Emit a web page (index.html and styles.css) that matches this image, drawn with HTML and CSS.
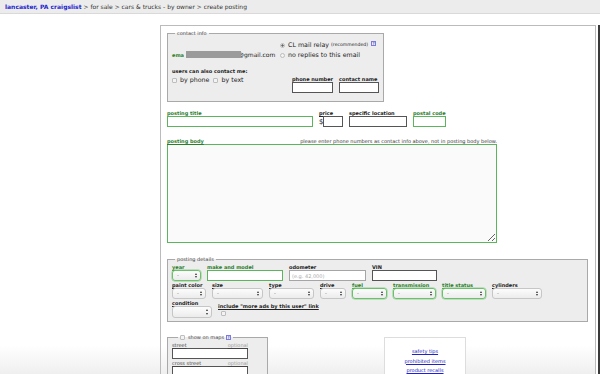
FILE: index.html
```html
<!DOCTYPE html>
<html lang="en">
<head>
    <meta charset="UTF-8">
    <title>craigslist | create posting</title>
    <link rel="stylesheet" href="styles.css">
</head>
<body>
    <div class="crumbs">
        <a class="home" href="#">lancaster, PA craigslist</a> &gt; for sale &gt; cars &amp; trucks - by owner &gt; create posting
    </div>

    <div class="form">
        <!-- contact -->
        <fieldset class="contact">
            <legend>contact info</legend>
            <div class="contact-top">
                <div class="email">
                    <span class="green-lbl">ema</span><span class="blur"></span>@gmail.com
                </div>
                <div class="relay">
                    <label class="opt"><input type="radio" name="relay" class="radio" checked>CL mail relay <small>(recommended)</small><span class="help">?</span></label>
                    <label class="opt"><input type="radio" name="relay" class="radio">no replies to this email</label>
                </div>
            </div>
            <div class="contact-bottom">
                <div class="also">
                    <div class="also-title">users can also contact me:</div>
                    <div class="also-opts">
                        <label class="opt"><input type="checkbox" class="check">by phone</label>
                        <label class="opt"><input type="checkbox" class="check">by text</label>
                    </div>
                </div>
                <div class="field">
                    <span class="lbl">phone number</span>
                    <input type="text" class="txt w41">
                </div>
                <div class="field">
                    <span class="lbl">contact name</span>
                    <input type="text" class="txt w40">
                </div>
            </div>
        </fieldset>

        <!-- title / price / location -->
        <div class="row title-row">
            <div class="field">
                <span class="lbl green">posting title</span>
                <input type="text" class="txt green w146">
            </div>
            <div class="field">
                <span class="lbl">price</span>
                <div class="price"><span class="dollar">$</span><input type="text" class="txt w20"></div>
            </div>
            <div class="field">
                <span class="lbl">specific location</span>
                <input type="text" class="txt w58">
            </div>
            <div class="field">
                <span class="lbl green">postal code</span>
                <input type="text" class="txt green w33">
            </div>
        </div>

        <div class="body-head">
            <span class="lbl green">posting body</span>
            <span class="note">please enter phone numbers as contact info above, not in posting body below.</span>
        </div>
        <textarea class="body"></textarea>

        <!-- details -->
        <fieldset class="details">
            <legend>posting details</legend>
            <div class="drow">
                <div class="field w29">
                    <span class="lbl green">year</span>
                    <span class="sel green">-</span>
                </div>
                <div class="field">
                    <span class="lbl green">make and model</span>
                    <input type="text" class="txt green w76">
                </div>
                <div class="field">
                    <span class="lbl">odometer</span>
                    <input type="text" class="txt grey w77" placeholder="(e.g. 42,000)">
                </div>
                <div class="field">
                    <span class="lbl">VIN</span>
                    <input type="text" class="txt w65">
                </div>
            </div>
            <div class="drow">
                <div class="field w34"><span class="lbl">paint color</span><span class="sel">-</span></div>
                <div class="field w51"><span class="lbl">size</span><span class="sel">-</span></div>
                <div class="field w45"><span class="lbl">type</span><span class="sel">-</span></div>
                <div class="field w26"><span class="lbl">drive</span><span class="sel">-</span></div>
                <div class="field w35"><span class="lbl green">fuel</span><span class="sel green">-</span></div>
                <div class="field w43"><span class="lbl green">transmission</span><span class="sel green">-</span></div>
                <div class="field w44"><span class="lbl green">title status</span><span class="sel green">-</span></div>
                <div class="field w50"><span class="lbl">cylinders</span><span class="sel">-</span></div>
            </div>
            <div class="drow">
                <div class="field w40"><span class="lbl">condition</span><span class="sel tall"></span></div>
                <div class="field">
                    <span class="lbl">include "more ads by this user" link</span>
                    <input type="checkbox" class="check ads">
                </div>
            </div>
        </fieldset>

        <div class="bottom">
            <fieldset class="maps">
                <legend><input type="checkbox" class="check">show on maps<span class="help">?</span></legend>
                <div class="mlbl"><span>street</span><span class="optional">optional</span></div>
                <input type="text" class="txt w76">
                <div class="mlbl"><span>cross street</span><span class="optional">optional</span></div>
                <input type="text" class="txt w76">
            </fieldset>

            <div class="links">
                <a href="#">safety tips</a>
                <a href="#">prohibited items</a>
                <a href="#">product recalls</a>
            </div>
        </div>
    </div>
</body>
</html>
```

FILE: styles.css
```css
* {
    box-sizing: border-box;
}

html {
    min-height: 100%;
    background: linear-gradient(to bottom, #fff 345px, #efefef 374px) no-repeat;
}

body {
    margin: 0;
    font-family: "DejaVu Sans", Verdana, sans-serif;
    font-size: 5px;
    color: #222;
}

a {
    color: #2222c4;
}

/* breadcrumb bar */
.crumbs {
    height: 14px;
    padding: 0 5px;
    background-color: #ececec;
    border-bottom: 1px solid #d9d9d9;
    line-height: 13px;
    font-size: 6px;
    color: #333;
    white-space: nowrap;
}

.crumbs .home {
    font-weight: bold;
    text-decoration: none;
    color: #1f1fcc;
}

/* main form box */
.form {
    width: 436px;
    margin: 11px 0 0 160px;
    padding: 4px 6px 20px;
    border: 1px solid #bbb;
    box-shadow: 2px 0 0 #fff, 4px 0 0 #3a3a3a;
}

fieldset {
    margin: 0;
    padding: 1px 4px 5px;
    border: 1px solid #a9a9a9;
    background-color: #ededed;
}

legend {
    margin-left: 3px;
    padding: 0 2px;
    font-size: 5px;
    color: #444;
}

.lbl {
    font-weight: bold;
    font-size: 5px;
    line-height: 6px;
    text-decoration: underline;
    white-space: nowrap;
    color: #222;
}

.lbl.green,
.green-lbl {
    color: #2b7d2b;
}

.field {
    display: flex;
    flex-direction: column;
}

.txt {
    display: block;
    height: 11px;
    margin: 0;
    padding: 0 2px;
    border: 1px solid #555;
    background-color: #fff;
    font-family: inherit;
    font-size: 5px;
}

.txt.green {
    border-color: #5cb45c;
}

.txt.grey {
    border-color: #a5a5a5;
}

.txt::placeholder {
    color: #aaa;
}

.w20 { width: 20px; }
.w26 { width: 26px; }
.w29 { width: 29px; }
.w33 { width: 33px; }
.w34 { width: 34px; }
.w35 { width: 35px; }
.w40 { width: 40px; }
.w41 { width: 41px; }
.w43 { width: 43px; }
.w44 { width: 44px; }
.w45 { width: 45px; }
.w50 { width: 50px; }
.w51 { width: 51px; }
.w58 { width: 58px; }
.w65 { width: 65px; }
.w76 { width: 76px; }
.w77 { width: 77px; }
.w146 { width: 146px; }

/* radios + checkboxes */
.opt {
    display: flex;
    align-items: center;
    font-size: 6.3px;
    line-height: 10px;
    white-space: nowrap;
    color: #222;
}

.radio,
.check {
    appearance: none;
    width: 5px;
    height: 5px;
    margin: 0 3px 0 0;
    border: 1px solid #bdbdbd;
    background: #f3f3f3;
    flex-shrink: 0;
}

.radio {
    border-radius: 50%;
}

.radio:checked {
    background: radial-gradient(circle, #666 0.9px, #eee 1.3px);
}

.check {
    border-radius: 1px;
}

.opt small {
    margin-left: 2px;
    font-size: 4.6px;
}

.help {
    display: inline-block;
    width: 5px;
    height: 5px;
    margin: -4px 0 0 3px;
    border: 1px solid #7a7ae0;
    font-size: 4px;
    line-height: 3px;
    text-align: center;
    color: #2222c4;
}

/* contact info */
.contact {
    width: 214px;
    padding-bottom: 8px;
}

.contact-top {
    display: flex;
    align-items: flex-end;
    padding-top: 3px;
}

.email {
    display: flex;
    align-items: center;
    width: 108px;
    padding-bottom: 2px;
    font-size: 6px;
    white-space: nowrap;
}

.green-lbl {
    font-weight: bold;
    font-size: 5px;
}

.blur {
    width: 55px;
    height: 7px;
    margin: 0 -3px 0 2px;
    background-color: #9b9b9b;
    filter: blur(0.7px);
}

.contact-bottom {
    display: flex;
    align-items: flex-end;
    gap: 6px;
    margin-top: 8px;
}

.also {
    width: 114px;
}

.also-title {
    font-weight: bold;
    font-size: 5px;
    line-height: 7px;
}

.also-opts {
    display: flex;
    gap: 4px;
    margin-bottom: 8px;
}

/* title row */
.row {
    display: flex;
    align-items: flex-end;
    gap: 6px;
}

.title-row {
    margin-top: 8px;
}

.price {
    display: flex;
    align-items: center;
}

.dollar {
    width: 4px;
    font-size: 7px;
    color: #222;
}

.body-head {
    display: flex;
    justify-content: space-between;
    align-items: flex-end;
    width: 330px;
    margin-top: 11px;
}

.note {
    font-size: 5px;
    line-height: 6px;
    color: #333;
    white-space: nowrap;
}

.body {
    display: block;
    width: 330px;
    height: 99px;
    margin: 0;
    border: 1px solid #5cb45c;
    background-color: #fafafa;
    resize: both;
}

/* posting details */
.details {
    width: 421px;
    margin-top: 13px;
    padding-bottom: 3px;
}

.drow {
    display: flex;
    align-items: flex-end;
    gap: 6px;
    margin-top: 1px;
}

.drow + .drow {
    margin-top: 1px;
}

.sel {
    position: relative;
    display: block;
    height: 11px;
    padding-left: 4px;
    border: 1px solid #c6c6c6;
    border-radius: 3px;
    background: linear-gradient(#fcfcfc, #ececec);
    font-size: 5px;
    line-height: 9px;
    color: #666;
}

.sel.green {
    border: 1px solid #6cc06c;
    box-shadow: 0 0 0 0.5px #8fd08f;
}

.sel.tall {
    height: 12px;
}

.sel::before,
.sel::after {
    content: "";
    position: absolute;
    right: 3px;
    border-left: 1.5px solid transparent;
    border-right: 1.5px solid transparent;
}

.sel::before {
    top: 2px;
    border-bottom: 2px solid #333;
}

.sel::after {
    bottom: 2px;
    border-top: 2px solid #333;
}

.ads {
    margin: 2px 0 2px 3px;
}

/* maps + links */
.bottom {
    display: flex;
    align-items: flex-start;
    margin-top: 12px;
}

.maps {
    width: 101px;
    padding-bottom: 6px;
}

.maps legend {
    display: flex;
    align-items: center;
    margin-left: 6px;
    font-size: 5px;
}

.maps legend .help {
    margin: 0 0 0 2px;
}

.mlbl {
    display: flex;
    justify-content: space-between;
    width: 76px;
    margin-top: 1px;
    line-height: 6px;
    font-size: 5px;
    color: #444;
    text-decoration: underline;
}

.optional {
    color: #999;
    text-decoration: none;
}

.links {
    display: flex;
    flex-direction: column;
    align-items: center;
    width: 82px;
    margin: 3px 0 0 116px;
    padding: 9px 0 10px;
    border: 1px solid #ddd;
    background-color: #fff;
    font-size: 5px;
    line-height: 9.5px;
}
```
